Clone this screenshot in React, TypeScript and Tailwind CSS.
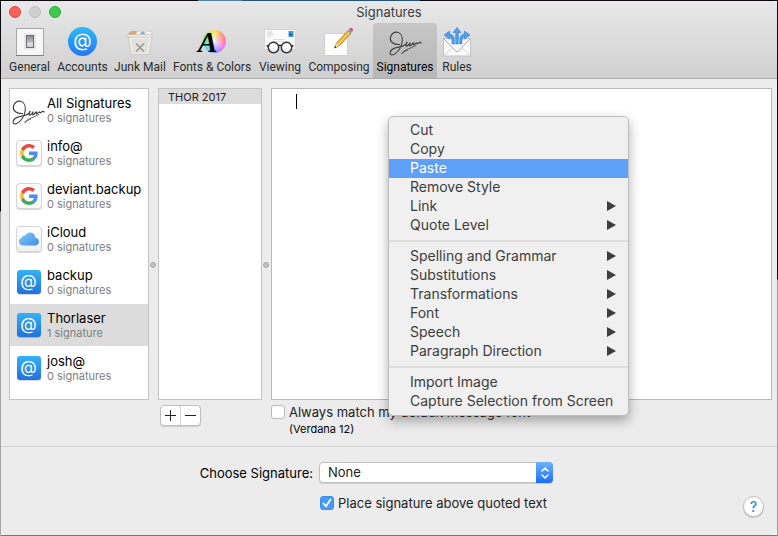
import { useId, useState } from "react";
import type { ReactNode } from "react";

function SignatureIcon({ className }: { className: string }) {
  return (
    <svg viewBox="0 0 100 76" className={className} fill="none" stroke="#3c3c3c" strokeWidth="3.4" strokeLinecap="round" strokeLinejoin="round" aria-hidden="true">
      <path d="M32 41C14 42 2 33 4 20C6 8 16 2 26 4C37 7 42 19 40 32C38 47 30 60 20 68C11 75 3 74 3 67C4 57 16 51 29 49C43 47 51 43 55 34C52 40 50 47 54 46C59 45 61 39 64 36C62 42 62 46 65 45C69 42 71 37 74 36C73 41 74 43 76 42C79 39 81 36 84 36C84 39 86 39 89 37C93 34 98 33 97 37" />
      <path d="M39 69C42 62 50 58 58 55C68 51 75 47 82 44" strokeWidth="2.4" />
      <path d="M39 68C46 62 52 60 57 58" strokeWidth="2" />
    </svg>
  );
}

function GeneralIcon() {
  return (
    <svg width="28" height="28" viewBox="0 0 28 28" aria-hidden="true">
      <defs>
        <linearGradient id="rocker" x1="0" y1="0" x2="0" y2="1">
          <stop offset="0" stopColor="#85858b" />
          <stop offset=".6" stopColor="#c4c4c8" />
          <stop offset=".62" stopColor="#e8e8ea" />
          <stop offset="1" stopColor="#c5c5ca" />
        </linearGradient>
      </defs>
      <rect x=".5" y=".5" width="27" height="27" fill="#f7f7f7" stroke="#a8a8a8" />
      <path d="M0 27.5h28" stroke="#808080" />
      <rect x="8" y="5.500" width="12" height="16" rx="1" fill="#e6e6e6" />
      <rect x="10.500" y="7.500" width="7" height="12" fill="url(#rocker)" stroke="#6b6b71" />
    </svg>
  );
}

function AccountsIcon() {
  return (
    <span className="flex size-[29px] items-center justify-center rounded-full bg-linear-to-b from-[#30bbf7] to-[#2776f3] pb-0.5 text-[19px] leading-[19px] text-white">
      @
    </span>
  );
}

function JunkIcon() {
  return (
    <svg width="28" height="28" viewBox="0 0 28 28" aria-hidden="true">
      <path d="M1 7l4-4 6 0-1 5z" fill="#e5a75b" />
      <path d="M9 7l3-4 3 2 1 3z" fill="#f5f5f5" stroke="#c9c9c9" strokeWidth=".5" />
      <path d="M14 6l3-3 3 4z" fill="#74b6de" />
      <path d="M18 7l3-4 5 1-1 4z" fill="#fbfbfb" stroke="#b9c4cc" strokeWidth=".6" />
      <path d="M2 8h24l-3 18.500H5.500z" fill="#eeeeea" stroke="#c2c2bd" strokeWidth=".7" />
      <path d="M5 11h18l-2 14H7z" fill="#e2e2dc" />
      <rect x=".5" y="6.500" width="27" height="2.500" rx="1.200" fill="#f4f4f0" fillOpacity=".85" stroke="#b5b4ad" strokeWidth=".6" />
      <path d="M10 15.500l8 8m0-8l-8 8" stroke="#9c9a8b" strokeWidth="1.600" />
    </svg>
  );
}

function FontsIcon() {
  return (
    <span className="grid w-7 items-center">
      <span className="col-start-1 row-start-1 size-[23px] justify-self-end rounded-full bg-[radial-gradient(circle,#ffffffcc_0%,#ffffff00_65%),conic-gradient(#f5e663,#ff9c6e,#ff7b9c,#f27bea,#a98bff,#62b7ff,#4fe8e0,#57e07a,#b8ee5c,#f5e663)]" />
      <span className="col-start-1 row-start-1 justify-self-start font-['Liberation_Serif',serif] text-[29px] leading-[36px] font-bold text-black italic">
        A
      </span>
    </span>
  );
}

function ViewingIcon() {
  return (
    <svg width="32" height="26" viewBox="0 0 32 26" aria-hidden="true">
      <rect x=".5" y=".5" width="31" height="20" fill="#fbfbfb" stroke="#d5d5d5" />
      <path d="M3 3h5M3 5h7M3 7h4" stroke="#c5c5c5" strokeWidth=".8" />
      <path d="M9 10.500h12M8 12.500h14" stroke="#cfcfcf" strokeWidth=".7" />
      <rect x="24.500" y="2" width="5" height="6" fill="#3c9bdc" />
      <path d="M25.500 5l2.500 1" stroke="#164d83" strokeWidth="1.500" />
      <g fill="#ffffff99" stroke="#343434" strokeWidth="1.500">
        <circle cx="9.500" cy="18.500" r="5.200" />
        <circle cx="22.500" cy="18.500" r="5.200" />
        <path d="M14.500 17q1.500-1.500 3 0M4.500 17.500l-2-1M27.500 17.500l2-1" fill="none" />
      </g>
    </svg>
  );
}

function ComposingIcon() {
  return (
    <svg width="30" height="30" viewBox="0 0 30 30" aria-hidden="true">
      <rect x=".5" y="6.500" width="23" height="22" fill="#fdfdfd" stroke="#d0d0d0" />
      <path d="M10.500 21l2.200-5.200L24 3.500l3 2.700L15.500 18.700z" fill="#f2bb35" stroke="#9c6d1b" strokeWidth=".7" />
      <path d="M14.200 17.200L25.500 5" stroke="#fbe184" strokeWidth="1" />
      <path d="M10.500 21l2.200-5.200 2.800 2.900z" fill="#ecd3a2" />
      <path d="M10.200 21.300l1-2.300 1.300 1.300z" fill="#222" />
      <path d="M23.500 4l1.500-1.700 3 2.700-1.600 1.700z" fill="#8e9aa8" />
      <path d="M25 2.300l1-1.200q1-.9 2.200.1t.8 2.200L27.900 5z" fill="#d9587c" />
    </svg>
  );
}

function RulesIcon() {
  return (
    <svg width="28" height="30" viewBox="0 0 28 30" aria-hidden="true">
      <rect x=".5" y="11.500" width="27" height="17.500" fill="#fafafa" stroke="#c4c4c4" />
      <path d="M1 28.500l10-9.500M27 28.500L17 19" stroke="#cfcfcf" />
      <path d="M1 12l11.500 12q1.500 1.300 3 0L27 12" fill="#f6f6f6" stroke="#adadad" />
      <g fill="#4b9ff0" stroke="#2f78c8" strokeWidth=".5" strokeLinejoin="round">
        <path d="M12.700 17V5.500H10L14 .5l4 5h-2.700V17z" />
        <path d="M9 17Q9.300 10.500 6.500 9.700v2.600L1 8l5.500-4v2.800Q12 7.500 11.500 17z" />
        <path d="M19 17q-.3-6.500 2.500-7.300v2.600L27 8l-5.500-4v2.800Q16 7.500 16.500 17z" />
      </g>
    </svg>
  );
}

function GoogleIcon() {
  return (
    <span className="flex size-[26px] items-center justify-center rounded-[4px] border border-[#d4d4d4] bg-[#fdfdfd] shadow-[0_1px_1px_#0000002a]">
      <svg width="18" height="18" viewBox="0 0 48 48" aria-hidden="true">
        <path fill="#e94b3f" d="M24 9.5c3.54 0 6.71 1.22 9.21 3.6l6.85-6.85C35.9 2.38 30.47 0 24 0 14.62 0 6.51 5.38 2.56 13.22l7.98 6.19C12.43 13.72 17.74 9.5 24 9.500z" />
        <path fill="#4d8df5" d="M46.98 24.55c0-1.57-.15-3.09-.38-4.55H24v9.02h12.94c-.58 2.96-2.26 5.48-4.78 7.18l7.73 6c4.51-4.18 7.09-10.36 7.09-17.650z" />
        <path fill="#f9bf2d" d="M10.53 28.59c-.48-1.45-.76-2.99-.76-4.59s.27-3.14.76-4.59l-7.98-6.19C.92 16.46 0 20.12 0 24c0 3.88.92 7.54 2.56 10.78l7.97-6.190z" />
        <path fill="#3bab5a" d="M24 48c6.48 0 11.93-2.13 15.89-5.81l-7.73-6c-2.15 1.45-4.92 2.3-8.16 2.3-6.26 0-11.57-4.22-13.47-9.91l-7.98 6.19C6.51 42.62 14.62 48 24 48z" />
      </svg>
    </span>
  );
}

function CloudIcon() {
  return (
    <span className="flex size-[26px] items-center justify-center rounded-[4px] border border-[#d4d4d4] bg-linear-to-b from-white to-[#f0f0f0] shadow-[0_1px_1px_#0000002a]">
      <svg width="20" height="14" viewBox="0 0 20 14" aria-hidden="true">
        <defs>
          <linearGradient id="cloud" x1="0" y1="0" x2="1" y2="1">
            <stop offset="0" stopColor="#86cbf5" />
            <stop offset="1" stopColor="#3f8fea" />
          </linearGradient>
        </defs>
        <path fill="url(#cloud)" d="M4 13.500Q0 13 0 9.500 0 6.500 2.800 5.800 3.500 3 6.300 3.500 8 .3 11.500.5 16 1 16.300 5.800 20 6.500 20 9.700 19.800 13 16 13.500z" />
      </svg>
    </span>
  );
}

function AtIcon() {
  return (
    <span className="flex size-6 items-center justify-center rounded-[3px] bg-linear-to-b from-[#35b2f6] to-[#2271dc] pb-0.5 text-[17px] leading-[17px] text-white shadow-[0_1px_1px_#0000002a]">
      @
    </span>
  );
}

type Tool = { label: string; width: string; icon: ReactNode };

const tools: Tool[] = [
  { label: "General", width: "w-[49px]", icon: <GeneralIcon /> },
  { label: "Accounts", width: "w-[57px]", icon: <AccountsIcon /> },
  { label: "Junk Mail", width: "w-[58px]", icon: <JunkIcon /> },
  { label: "Fonts & Colors", width: "w-[86px]", icon: <FontsIcon /> },
  { label: "Viewing", width: "w-[50px]", icon: <ViewingIcon /> },
  { label: "Composing", width: "w-[68px]", icon: <ComposingIcon /> },
  { label: "Signatures", width: "w-[64px]", icon: <SignatureIcon className="mt-1 h-[25px] w-[33px]" /> },
  { label: "Rules", width: "w-[40px]", icon: <RulesIcon /> },
];

type Account = { name: string; detail: string; icon: ReactNode };

const accounts: Account[] = [
  { name: "All Signatures", detail: "0 signatures", icon: <SignatureIcon className="mt-1 h-[25px] w-[33px]" /> },
  { name: "info@", detail: "0 signatures", icon: <GoogleIcon /> },
  { name: "deviant.backup", detail: "0 signatures", icon: <GoogleIcon /> },
  { name: "iCloud", detail: "0 signatures", icon: <CloudIcon /> },
  { name: "backup", detail: "0 signatures", icon: <AtIcon /> },
  { name: "Thorlaser", detail: "1 signature", icon: <AtIcon /> },
  { name: "josh@", detail: "0 signatures", icon: <AtIcon /> },
];

const menuGroups: { label: string; submenu?: boolean }[][] = [
  [
    { label: "Cut" },
    { label: "Copy" },
    { label: "Paste" },
    { label: "Remove Style" },
    { label: "Link", submenu: true },
    { label: "Quote Level", submenu: true },
  ],
  [
    { label: "Spelling and Grammar", submenu: true },
    { label: "Substitutions", submenu: true },
    { label: "Transformations", submenu: true },
    { label: "Font", submenu: true },
    { label: "Speech", submenu: true },
    { label: "Paragraph Direction", submenu: true },
  ],
  [{ label: "Import Image" }, { label: "Capture Selection from Screen" }],
];

function Toolbar() {
  return (
    <header className="border-b border-[#adadad] bg-linear-to-b from-[#e9e8e9] to-[#d0d0d0]">
      <div className="grid h-[22px] grid-cols-3 items-center px-2">
        <div className="flex gap-2">
          <button aria-label="Close" className="size-3 rounded-full border border-[#e2463f] bg-[#fc605b]" />
          <button aria-label="Minimize" className="size-3 rounded-full border border-[#bdbdbd] bg-[#d0d0d0]" />
          <button aria-label="Zoom" className="size-3 rounded-full border border-[#2dac3b] bg-[#3dcb50]" />
        </div>
        <h1 className="text-center text-[13px] leading-4 text-[#3c3c3c]">Signatures</h1>
      </div>
      <nav className="flex px-1">
        {tools.map((tool) => (
          <button
            key={tool.label}
            aria-pressed={tool.label === "Signatures"}
            className={`flex h-[55px] shrink-0 flex-col items-center rounded-t-[4px] ${tool.width} ${
              tool.label === "Signatures" ? "bg-linear-to-b from-[#c6c6c6] to-[#b7b7b7] text-black" : "text-[#2b2b2b]"
            }`}
          >
            <span className="flex h-[37px] items-center justify-center">{tool.icon}</span>
            <span className="font-['Roboto',sans-serif] text-[12px] leading-[14px] whitespace-nowrap">{tool.label}</span>
          </button>
        ))}
      </nav>
    </header>
  );
}

function AccountList() {
  return (
    <ul className="h-[312px] w-[140px] shrink-0 border border-[#c3c3c3] bg-white">
      {accounts.map((account) => (
        <li key={account.name} className="pb-px">
          <button
            className={`flex h-[42px] w-full items-center text-left ${account.name === "Thorlaser" ? "bg-[#dcdcdc]" : ""}`}
          >
            <span className="flex w-[37px] shrink-0 items-center justify-center">{account.icon}</span>
            <span className="flex flex-col">
              <span className="text-[13px] leading-[16px] whitespace-nowrap text-black">{account.name}</span>
              <span className="text-[11px] leading-[14px] whitespace-nowrap text-[#808080]">{account.detail}</span>
            </span>
          </button>
        </li>
      ))}
    </ul>
  );
}

function Splitter() {
  return (
    <div role="separator" className="flex w-[9px] shrink-0 items-center pt-[42px] pl-px">
      <span className="size-[6px] rounded-full border border-[#a9a9a9] bg-[#c0c0c0]" />
    </div>
  );
}

function Checkbox({ id, checked, onChange }: { id: string; checked: boolean; onChange: (next: boolean) => void }) {
  return (
    <span className="grid size-[14px] shrink-0">
      <input
        id={id}
        type="checkbox"
        checked={checked}
        onChange={(event) => onChange(event.target.checked)}
        className="col-start-1 row-start-1 size-[14px] appearance-none rounded-[3px] border border-[#b9b9b9] bg-white checked:border-[#3c8ef0] checked:bg-[#459af7]"
      />
      {checked && (
        <svg viewBox="0 0 14 14" className="pointer-events-none col-start-1 row-start-1 size-[14px]" fill="none" stroke="white" strokeWidth="1.8" strokeLinecap="round" aria-hidden="true">
          <path d="M3.500 7.500L6 10.200 10.500 3.500" />
        </svg>
      )}
    </span>
  );
}

function ContextMenu() {
  return (
    <div
      role="menu"
      className="absolute top-[116px] left-[388px] w-[241px] rounded-[5px] border border-[#bdbdbd] bg-[#f0f0f0] py-1 shadow-[0_5px_12px_#00000050]"
    >
      {menuGroups.map((group, index) => (
        <div key={group[0].label}>
          {index > 0 && <div role="separator" className="my-[5px] h-[2px] bg-[#dedede]" />}
          {group.map((item) => (
            <button
              key={item.label}
              role="menuitem"
              className={`flex h-[19px] w-full items-center justify-between pr-3 pb-0.5 pl-[21px] text-[14px] leading-[17px] whitespace-nowrap ${
                item.label === "Paste" ? "bg-[#5e9ffa] text-white" : "text-[#3d3d3d]"
              }`}
            >
              {item.label}
              {item.submenu && (
                <svg width="9" height="10" viewBox="0 0 9 10" fill="#3d3d3d" aria-hidden="true">
                  <path d="M0 0L9 5 0 10z" />
                </svg>
              )}
            </button>
          ))}
        </div>
      ))}
    </div>
  );
}

export default function App() {
  const matchId = useId();
  const placeId = useId();
  const selectId = useId();
  const [match, setMatch] = useState(false);
  const [place, setPlace] = useState(true);

  return (
    <div className="relative min-h-screen bg-[linear-gradient(90deg,#0c0a0e_198px,#4d80ad_198px,#4d80ad_242px,#27527a_242px,#27527a_420px,#0c0a0e_420px)] bg-[length:100%_1px] bg-no-repeat font-['Inter',sans-serif]">
      <div className="flex min-h-screen bg-[linear-gradient(#0c0a0e_210px,#a5a5a5_211px),linear-gradient(#0c0a0e_278px,#999_279px),linear-gradient(#777,#777)] bg-[position:0_1px,100%_1px,0_100%] bg-[size:1px_100%,1px_100%,100%_1px] bg-no-repeat p-px">
        <main className="flex min-w-0 flex-1 flex-col overflow-hidden rounded-[5px] bg-[#ececec]">
          <Toolbar />

          <section className="flex pt-[9px] pr-[5px] pl-2">
            <AccountList />
            <Splitter />
            <ul className="h-[312px] w-[104px] shrink-0 border border-[#c3c3c3] bg-white">
              <li className="h-[15px] bg-[#dcdcdc] pl-[9px] text-[11px] leading-[16px] text-[#222]">THOR 2017</li>
            </ul>
            <Splitter />
            <div className="relative h-[312px] flex-1 border border-[#b9b9b9] bg-white">
              <textarea aria-label="Signature text" className="block h-full w-full resize-none px-6 py-1 text-[12px] outline-none" />
              <span className="absolute top-[5px] left-6 h-[15px] w-px bg-black" />
            </div>
          </section>

          <section className="flex h-[47px] items-start border-b border-[#d0d0d0] pt-[5px] pl-[159px]">
            <div className="flex h-[21px] w-[41px] shrink-0 rounded-[4px] border border-[#bfbfbf] bg-white shadow-[0_1px_0_#00000020]">
              <button aria-label="Add signature" className="flex flex-1 items-center justify-center border-r border-[#d5d5d5]">
                <svg width="11" height="11" viewBox="0 0 11 11" stroke="#222" aria-hidden="true">
                  <path d="M0 5.500h11M5.500 0v11" />
                </svg>
              </button>
              <button aria-label="Remove signature" className="flex flex-1 items-center justify-center">
                <svg width="11" height="11" viewBox="0 0 11 11" stroke="#222" aria-hidden="true">
                  <path d="M0 5.500h11" />
                </svg>
              </button>
            </div>
            <div className="ml-[70px] flex gap-1">
              <Checkbox id={matchId} checked={match} onChange={setMatch} />
              <label htmlFor={matchId} className="flex flex-col">
                <span className="text-[13px] leading-[14px] text-[#222]">Always match my default message font</span>
                <span className="text-[11px] leading-5 text-black">(Verdana 12)</span>
              </label>
            </div>
          </section>

          <section className="flex flex-1 items-start pt-[15px] pr-[13px]">
            <div className="flex flex-1 flex-col gap-[11px]">
              <div className="flex items-center">
                <label htmlFor={selectId} className="w-[312px] text-right text-[13px] leading-4 text-black">
                  Choose Signature:
                </label>
                <div className="relative ml-[6px] h-[22px] w-[234px]">
                  <select
                    id={selectId}
                    className="block h-[21px] w-full appearance-none rounded-[4px] border border-[#c0c0c0] bg-white pl-2 text-[13px] text-[#222] shadow-[0_1px_0_#00000020]"
                  >
                    <option>None</option>
                  </select>
                  <span className="pointer-events-none absolute top-0 right-0 flex h-[21px] w-[17px] items-center justify-center rounded-r-[4px] bg-linear-to-b from-[#6bb1fa] to-[#1a6dfb]">
                    <svg width="8" height="12" viewBox="0 0 8 12" fill="none" stroke="white" strokeWidth="1.500" strokeLinecap="round" strokeLinejoin="round" aria-hidden="true">
                      <path d="M1 4l3-3 3 3M1 8l3 3 3-3" />
                    </svg>
                  </span>
                </div>
              </div>
              <div className="flex items-center gap-1 pl-[319px]">
                <Checkbox id={placeId} checked={place} onChange={setPlace} />
                <label htmlFor={placeId} className="text-[13px] leading-4 text-[#222]">
                  Place signature above quoted text
                </label>
              </div>
            </div>
            <button aria-label="Help" className="mt-[34px] flex size-[21px] items-center justify-center rounded-full border border-[#c0c0c0] bg-white text-[14px] leading-4 font-medium text-[#2a8af5] shadow-[0_1px_1px_#00000030]">
              ?
            </button>
          </section>
        </main>
      </div>
      <ContextMenu />
    </div>
  );
}
